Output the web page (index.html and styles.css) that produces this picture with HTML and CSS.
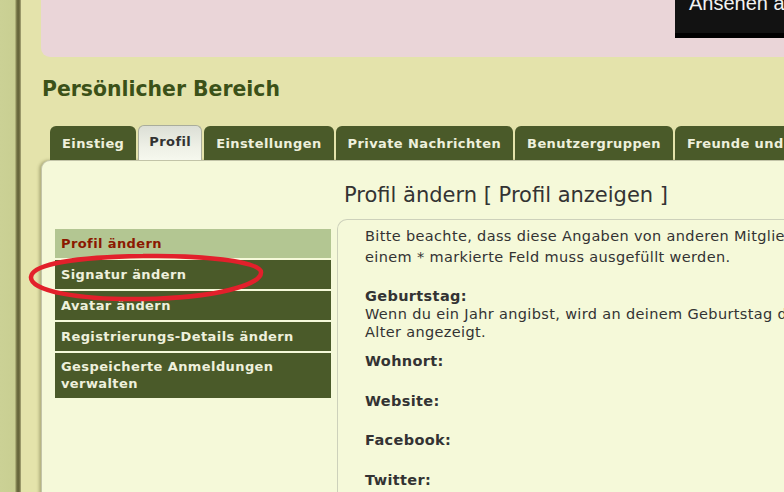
FILE: index.html
```html
<!DOCTYPE html>
<html lang="de">
<head>
<meta charset="UTF-8" />
<meta name="viewport" content="width=device-width, initial-scale=1" />
<title>Persönlicher Bereich</title>
<link rel="stylesheet" href="styles.css">
</head>
<body>

<div class="shell">
  <div class="edge"></div>

  <div class="page">
    <!-- Werbebanner oben -->
    <div class="banner">
      <div class="video-bar"><span>Ansehen auf YouTube</span></div>
    </div>

    <h1>Persönlicher Bereich</h1>

    <ul class="tabs">
      <li class="tab">Einstieg</li>
      <li class="tab active">Profil</li>
      <li class="tab">Einstellungen</li>
      <li class="tab">Private Nachrichten</li>
      <li class="tab">Benutzergruppen</li>
      <li class="tab">Freunde und Ignorierte</li>
    </ul>

    <div class="panel">
      <div class="side">
        <ul class="menu">
          <li class="menu-item current">Profil ändern</li>
          <li class="menu-item">Signatur ändern</li>
          <li class="menu-item">Avatar ändern</li>
          <li class="menu-item">Registrierungs-Details ändern</li>
          <li class="menu-item">Gespeicherte Anmeldungen verwalten</li>
        </ul>
        <!-- Markierung -->
        <svg class="mark" width="244" height="52" viewBox="0 0 244 52">
          <path d="M116 3 C 172 2, 233 8, 234 19 C 235 32, 188 45, 116 46 C 52 47, 3 38, 4 24 C 5 11, 50 4, 116 3" fill="none" stroke="#e2202b" stroke-width="4.5"/>
        </svg>
      </div>

      <div class="main">
        <h2>Profil ändern <span class="alt">[ Profil anzeigen ]</span></h2>
        <div class="box">
          <p class="intro">Bitte beachte, dass diese Angaben von anderen Mitgliedern gesehen werden können. Jedes mit<br>einem * markierte Feld muss ausgefüllt werden.</p>

          <div class="field first">
            <div class="label">Geburtstag:</div>
            <div class="hint">Wenn du ein Jahr angibst, wird an deinem Geburtstag dein<br>Alter angezeigt.</div>
          </div>
          <div class="field"><div class="label">Wohnort:</div></div>
          <div class="field"><div class="label">Website:</div></div>
          <div class="field"><div class="label">Facebook:</div></div>
          <div class="field"><div class="label">Twitter:</div></div>
        </div>
      </div>
    </div>
  </div>
</div>

</body>
</html>
```

FILE: styles.css
```css
body {
  margin: 0;
  font-family: "DejaVu Sans", Verdana, sans-serif;
  background: #e4e3ab;
  color: #333;
  overflow: hidden;
}
.shell {
  display: flex;
  height: 492px;
  overflow: hidden;
}
/* linker Rand */
.edge {
  width: 21px;
  flex-shrink: 0;
  background: linear-gradient(to right, #cbd195 0, #c9cf92 15px, #8d8d5a 16px, #5f5f35 18px, #7c7a4c 20px, #b8b688 21px);
}
.page {
  flex: 1;
  min-width: 0;
  padding-left: 20px;
}
/* Banner */
.banner {
  height: 57px;
  background: #ead5d8;
  border-bottom-left-radius: 9px;
  display: flex;
  justify-content: flex-end;
}
.video-bar {
  width: 109px;
  height: 38px;
  background: linear-gradient(#121212 0, #121212 33px, #000 33px);
  overflow: hidden;
  white-space: nowrap;
}
.video-bar span {
  display: block;
  margin: -8px 0 0 14px;
  font-family: "Liberation Sans", Arial, sans-serif;
  font-size: 20px;
  color: #f2f2f2;
}
h1 {
  margin: 19px 0 0 1px;
  font-size: 20.4px;
  line-height: 26px;
  color: #3b5118;
}
/* Reiter */
.tabs {
  list-style: none;
  display: flex;
  gap: 2px;
  margin: 24px 0 0 9px;
  padding: 0;
  white-space: nowrap;
}
.tab {
  height: 34px;
  line-height: 35px;
  padding: 0 12px;
  background: #4a5a29;
  color: #eef0dc;
  font-size: 13px;
  font-weight: bold;
  letter-spacing: 0.4px;
  border-radius: 6px 6px 0 0;
  flex-shrink: 0;
}
.tab.active {
  margin-top: -1px;
  height: 34px;
  line-height: 31px;
  padding: 0 10px;
  color: #333;
  background: linear-gradient(#dcdfd6, #eef0e6 60%, #f6f8ee);
  border: 1px solid #a9ad9c;
  border-bottom: none;
}
/* Inhalt */
.panel {
  display: flex;
  height: 340px;
  background: #f5f9d9;
  border-top: 1px solid #c2c4a8;
  border-left: 1px solid #c2c4a8;
  border-top-left-radius: 9px;
  box-shadow: -2px 0 3px rgba(80, 80, 40, 0.35);
}
.side {
  position: relative;
  width: 276px;
  flex-shrink: 0;
  margin-left: 13px;
  padding-top: 68px;
}
.menu {
  list-style: none;
  margin: 0;
  padding: 0;
}
.menu-item {
  padding: 6px 6px;
  margin-bottom: 2px;
  line-height: 17px;
  font-size: 13px;
  font-weight: bold;
  letter-spacing: 0.4px;
  background: #4a5a29;
  color: #eef0dc;
}
.menu-item:last-child {
  padding: 5px 6px 6px;
}
.menu-item.current {
  background: #b3c692;
  color: #8b1800;
}
.mark {
  position: absolute;
  left: -28px;
  top: 92px;
}
.main {
  flex: 1;
  margin-left: 6px;
  min-width: 0;
}
h2 {
  margin: 22px 0 0 7px;
  font-size: 21px;
  line-height: 24px;
  font-weight: normal;
  color: #333;
  white-space: nowrap;
}
.box {
  margin-top: 12px;
  height: 300px;
  border-top: 1px solid #cdd1bb;
  border-left: 1px solid #cdd1bb;
  border-top-left-radius: 10px;
  padding: 6px 0 0 27px;
  white-space: nowrap;
  font-size: 14.5px;
  letter-spacing: 0.35px;
}
.intro {
  margin: 0;
  line-height: 21px;
}
.field {
  margin-top: 21.5px;
  line-height: 18px;
}
.field.first {
  margin-top: 19px;
}
.field.first + .field {
  margin-top: 11px;
}
.label {
  font-weight: bold;
}
```
